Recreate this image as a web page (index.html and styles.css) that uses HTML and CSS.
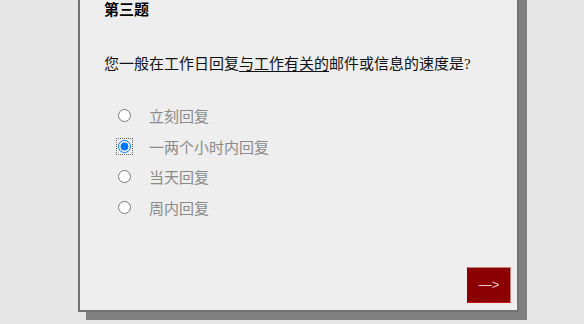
FILE: index.html
```html
<!DOCTYPE html>
<html lang="zh-CN">
<head>
    <meta charset="UTF-8">
    <meta name="viewport" content="width=device-width, initial-scale=1.0">
    <title>问卷 - 第三题</title>
    <link rel="stylesheet" href="styles.css">
</head>
<body>
    <div class="card">
        <div class="q-title">第三题</div>
        <div class="q-text">您一般在工作日回复<u>与工作有关的</u>邮件或信息的速度是?</div>

        <form class="options">
            <label class="option"><input type="radio" name="q3" value="1"><span>立刻回复</span></label>
            <label class="option"><input type="radio" name="q3" value="2" class="focused" checked><span>一两个小时内回复</span></label>
            <label class="option"><input type="radio" name="q3" value="3"><span>当天回复</span></label>
            <label class="option"><input type="radio" name="q3" value="4"><span>周内回复</span></label>
        </form>

        <div class="nav">
            <button class="next-btn" type="button">—&gt;</button>
        </div>
    </div>
</body>
</html>
```

FILE: styles.css
```css
html {
    background-color: #e5e5e5;
}

body {
    margin: 0;
    padding-bottom: 12px;
    background-color: #e5e5e5;
    font-family: "Liberation Serif", "Noto Sans CJK SC", serif;
    font-size: 15px;
    color: #000;
}

.card {
    width: 437px;
    margin: -40px 0 0 78px;
    padding-top: 38px;
    background-color: #eeeeee;
    border: 2px solid #737373;
    box-shadow: 8px 8px 0 #808080;
}

.q-title {
    padding-left: 24px;
    line-height: 20px;
    font-weight: bold;
}

.q-text {
    margin-top: 34px;
    padding-left: 24px;
    line-height: 20px;
    color: #111;
}

.q-text u {
    text-underline-offset: 2px;
}

/* 选项 */
.options {
    margin: 26px 0 0;
    padding-left: 38px;
}

.option {
    display: flex;
    align-items: center;
    height: 30.7px;
    color: #8a8a8a;
}

.option input {
    width: 13px;
    height: 13px;
    margin: 0 18px 0 0;
}

.option input.focused {
    outline: 1px dotted #666;
    outline-offset: 1px;
}

.nav {
    display: flex;
    justify-content: flex-end;
    margin-top: 44px;
    padding: 0 6px 7px 0;
}

.next-btn {
    width: 44px;
    height: 36px;
    padding: 0;
    background-color: #8b0000;
    color: #f0c8c8;
    border: 1px solid #8b0000;
    border-top-color: #c58080;
    border-right-color: #c58080;
    border-bottom-color: #c81010;
    font-family: "Liberation Sans", sans-serif;
    font-size: 13px;
    cursor: pointer;
}
```
